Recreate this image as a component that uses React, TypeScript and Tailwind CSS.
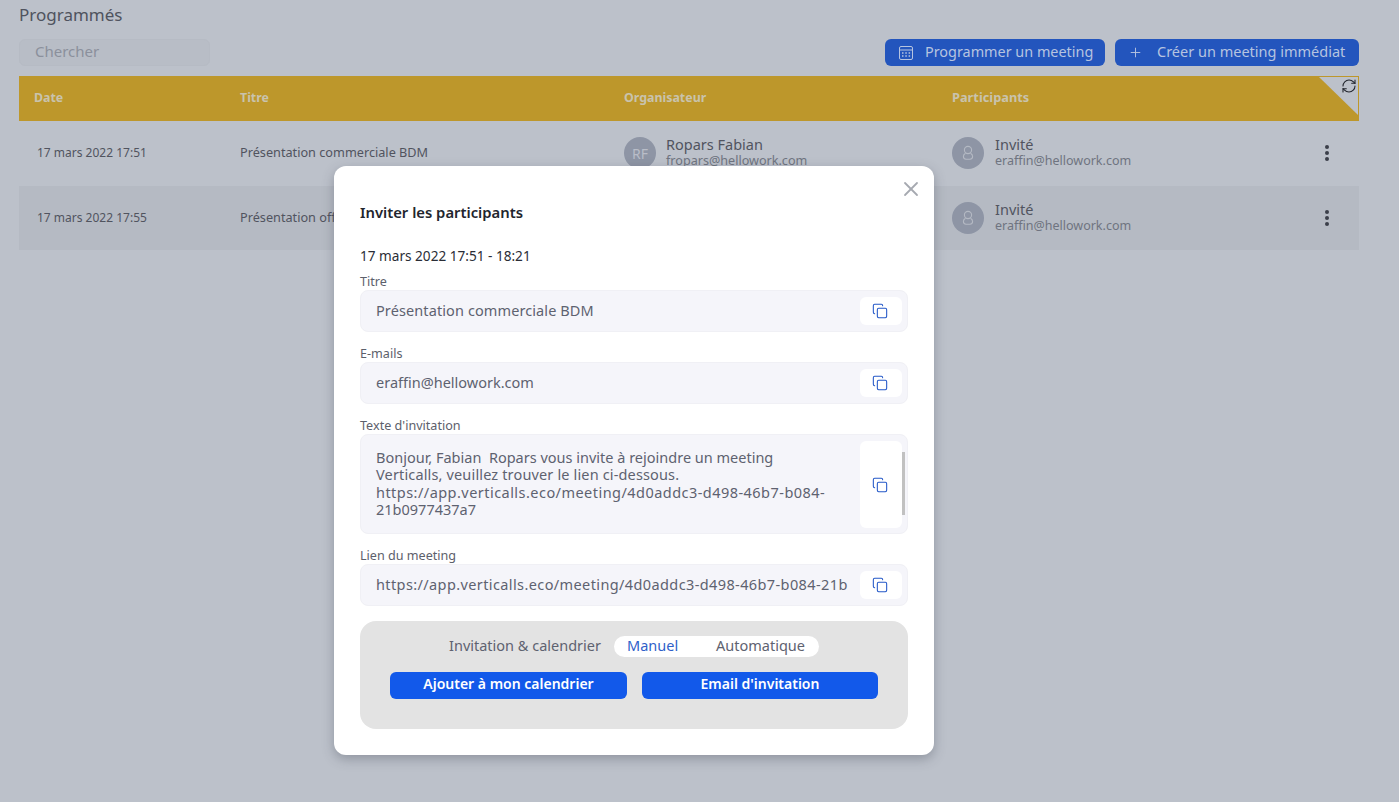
import { Copy, Plus, RefreshCw, X } from "lucide-react";

function CalendarIcon() {
  return (
    <svg width="16" height="16" viewBox="0 0 16 16" fill="none" stroke="currentColor" strokeWidth="1">
      <rect x="1.5" y="1.5" width="13" height="13" rx="1.5" />
      <path d="M1.5 5h13" />
      <path d="M4 8h1.5M7.3 8h1.5M10.6 8h1.5M4 11h1.5M7.3 11h1.5M10.6 11h1.5" strokeWidth="1.4" />
    </svg>
  );
}

function GuestIcon() {
  return (
    <svg width="18" height="18" viewBox="0 0 18 18" fill="none" stroke="#b4b9c3" strokeWidth="1.1">
      <circle cx="9" cy="6" r="3.6" />
      <path d="M6.5 9.2C4.8 10 4.4 11.2 4.4 12.6c0 1.7 1.2 2.6 2.6 2.6h4c1.4 0 2.6-.9 2.6-2.6 0-1.4-.4-2.6-2.1-3.4" />
    </svg>
  );
}

function Dots() {
  return (
    <div className="flex flex-col gap-[2px]">
      <span className="w-1 h-1 rounded-full bg-[#3b3f4a]" />
      <span className="w-1 h-1 rounded-full bg-[#3b3f4a]" />
      <span className="w-1 h-1 rounded-full bg-[#3b3f4a]" />
    </div>
  );
}

function Guest() {
  return (
    <div className="absolute left-[952px] top-0 h-full flex items-center gap-[11px]">
      <div className="w-8 h-8 rounded-full bg-[#8e95a5] flex items-center justify-center -mt-[1px]">
        <GuestIcon />
      </div>
      <div className="flex flex-col -mt-[3px]">
        <span className="text-[14.5px] leading-[16px] text-[#51545f]">Invité</span>
        <span className="relative top-[1px] text-[12.5px] leading-[16px] text-[#6f7480]">eraffin@hellowork.com</span>
      </div>
    </div>
  );
}

function Field({ label, value, top, tall }: { label: string; value: React.ReactNode; top: number; tall?: boolean }) {
  return (
    <div className="absolute left-[26px] w-[548px]" style={{ top }}>
      <div className="text-[12.6px] leading-[14px] text-[#5c606b] h-[14px] mt-[1px] -mb-[1px]">{label}</div>
      <div
        className={
          "relative mt-[2px] bg-[#f5f5fa] border border-[#f0f0f5] rounded-lg pl-[15px] text-[14.5px] text-[#5e6270] " +
          (tall ? "h-[100px] pt-[14px] leading-[17.3px]" : "h-[42px] leading-[38px]")
        }
      >
        {value}
        <button
          className={
            "absolute left-[499px] w-[42px] bg-white rounded-md flex items-center justify-center text-[#2458c8] " +
            (tall ? "top-[6px] h-[87px]" : "top-[6px] h-[28px]")
          }
        >
          <Copy size={16} strokeWidth={1.6} className="-ml-[2px]" />
        </button>
        {tall && <div className="absolute left-[541px] top-[17px] w-[3px] h-[63px] bg-[#c1c1c1]" />}
      </div>
    </div>
  );
}

export default function App() {
  return (
    <div className="relative w-[1399px] h-[802px] overflow-hidden bg-[#bcc1ca] [font-family:Inter,'Liberation_Sans',sans-serif]">
      <h1 className="absolute left-[19px] top-[5px] text-[17px] leading-[20px] font-normal text-[#4f535e]">Programmés</h1>

      <div className="absolute left-[19px] top-[39px] w-[191px] h-[27px] rounded-md border border-[#b6bbc4] bg-[#b8bdc6] pl-[15px] text-[15px] leading-[22px] text-[#8b909c]">
        Chercher
      </div>

      <div className="absolute right-[40px] top-[39px] flex gap-[10px]">
        <button className="h-[27px] w-[220px] rounded-md bg-[#2355bd] text-[#b6c4e0] flex items-center pl-[13px] text-[14.4px]">
          <CalendarIcon />
          <span className="ml-[11px] -mt-[2px]">Programmer un meeting</span>
        </button>
        <button className="h-[27px] w-[244px] rounded-md bg-[#2355bd] text-[#b6c4e0] flex items-center pl-[13px] text-[14.5px]">
          <Plus size={15} strokeWidth={1.5} />
          <span className="ml-[14px] -mt-[2px]">Créer un meeting immédiat</span>
        </button>
      </div>

      <div className="absolute left-[19px] top-[76px] w-[1340px] h-[45px] bg-[#bd972b] text-[12.4px] font-bold text-[#c9c3ad]">
        <span className="absolute left-[15px] top-[14px] leading-[15px]">Date</span>
        <span className="absolute left-[221px] top-[14px] leading-[15px]">Titre</span>
        <span className="absolute left-[605px] top-[14px] leading-[15px]">Organisateur</span>
        <span className="absolute left-[933px] top-[14px] leading-[15px] text-[12.8px]">Participants</span>
        <div className="absolute left-[1300px] top-[1px] w-[39px] h-[38px] bg-[#bcc1ca] [clip-path:polygon(0_0,100%_0,100%_100%)]" />
        <RefreshCw size={16} strokeWidth={1.6} className="absolute left-[1322px] top-[2px] text-[#23262e]" />
      </div>

      <div className="absolute left-[19px] top-[121px] w-[1340px] h-[65px] text-[12px] text-[#51545f]">
        <div className="absolute -left-[19px] top-0 w-[1399px] h-full">
          <span className="absolute left-[37px] top-[24px] leading-[15px]">17 mars 2022 17:51</span>
          <span className="absolute left-[240px] top-[24px] leading-[15px] text-[12.7px]">Présentation commerciale BDM</span>
          <div className="absolute left-[624px] top-0 h-full flex items-center gap-[10px]">
            <div className="w-8 h-8 rounded-full bg-[#8e95a5] flex items-center justify-center text-[14px] text-[#b9bdc8] -mt-[1px]">RF</div>
            <div className="flex flex-col -mt-[3px]">
              <span className="text-[14.5px] leading-[16px]">Ropars Fabian</span>
              <span className="relative top-[1px] text-[12.6px] leading-[16px] text-[#6f7480]">fropars@hellowork.com</span>
            </div>
          </div>
          <Guest />
          <div className="absolute left-[1325px] top-[24px]"><Dots /></div>
        </div>
      </div>

      <div className="absolute left-[19px] top-[186px] w-[1340px] h-[64px] bg-[#b5bac3] text-[12px] text-[#51545f]">
        <div className="absolute -left-[19px] top-0 w-[1399px] h-[65px]">
          <span className="absolute left-[37px] top-[24px] leading-[15px]">17 mars 2022 17:55</span>
          <span className="absolute left-[240px] top-[24px] leading-[15px] text-[12.7px]">Présentation offre</span>
          <Guest />
          <div className="absolute left-[1325px] top-[24px]"><Dots /></div>
        </div>
      </div>

      <div className="absolute left-[334px] top-[166px] w-[600px] h-[589px] bg-white rounded-xl shadow-[0_4px_12px_rgba(60,65,80,0.35)]">
        <X size={24} strokeWidth={1.8} className="absolute left-[565px] top-[11px] text-[#a6a9b0]" />
        <h2 className="absolute left-[26px] top-[37px] text-[14.8px] leading-[18px] font-semibold text-[#22252d]">Inviter les participants</h2>
        <div className="absolute left-[26px] top-[81px] text-[13.6px] leading-[18px] text-[#2a2d36]">17 mars 2022 17:51 - 18:21</div>

        <Field top={108} label="Titre" value={<span className="tracking-[0.1px]">Présentation commerciale BDM</span>} />
        <Field top={180} label="E-mails" value="eraffin@hellowork.com" />
        <Field
          top={252}
          tall
          label="Texte d'invitation"
          value={
            <div className="w-[480px]">
              <div>Bonjour, Fabian&nbsp; Ropars vous invite à rejoindre un meeting</div>
              <div className="tracking-[0.15px]">Verticalls, veuillez trouver le lien ci-dessous.</div>
              <div className="tracking-[0.46px]">https://app.verticalls.eco/meeting/4d0addc3-d498-46b7-b084-</div>
              <div>21b0977437a7</div>
            </div>
          }
        />
        <Field top={382} label="Lien du meeting" value={<span className="tracking-[0.39px]">https://app.verticalls.eco/meeting/4d0addc3-d498-46b7-b084-21b</span>} />

        <div className="absolute left-[26px] top-[455px] w-[548px] h-[108px] bg-[#e3e3e3] rounded-2xl">
          <span className="absolute left-[89px] top-[14px] text-[14.5px] leading-[20px] text-[#5e6270]">Invitation &amp; calendrier</span>
          <div className="absolute left-[254px] top-[15px] w-[205px] h-[21px] bg-white rounded-full text-[14.5px] leading-[20px]">
            <span className="absolute left-[13px] -top-[1px] text-[#2f5fc9]">Manuel</span>
            <span className="absolute left-[102px] -top-[1px] text-[#5e6270]">Automatique</span>
          </div>
          <button className="absolute left-[30px] top-[51px] w-[237px] h-[27px] bg-[#1259ea] rounded-md text-white text-[14px] font-semibold">
            <span className="relative -top-[2px]">Ajouter à mon calendrier</span>
          </button>
          <button className="absolute left-[282px] top-[51px] w-[236px] h-[27px] bg-[#1259ea] rounded-md text-white text-[14px] font-semibold">
            <span className="relative -top-[2px]">Email d'invitation</span>
          </button>
        </div>
      </div>
    </div>
  );
}
